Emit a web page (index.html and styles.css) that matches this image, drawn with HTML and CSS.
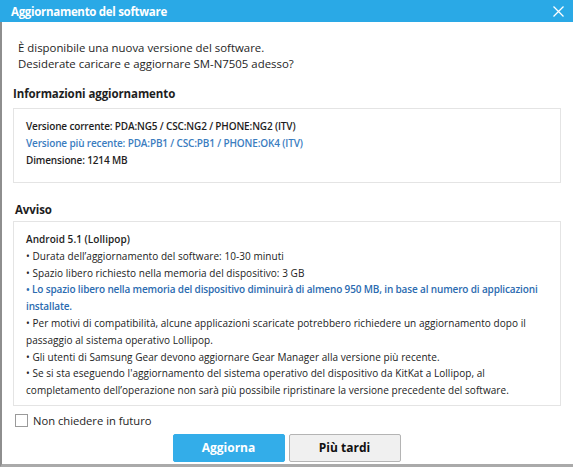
FILE: index.html
```html
<!DOCTYPE html>
<html lang="it">
<head>
<meta charset="utf-8">
<title>Aggiornamento del software</title>
<link rel="stylesheet" href="styles.css">
</head>
<body>
<div class="window">
  <header class="titlebar">
    <span class="title">Aggiornamento del software</span>
    <svg class="close" width="11" height="11" viewBox="0 0 11 11"><path d="M0.5 0.5 L10.5 10.5 M10.5 0.5 L0.5 10.5" stroke="#ffffff" stroke-width="1.3" fill="none"/></svg>
  </header>
  <main class="content">
    <p class="intro">È disponibile una nuova versione del software.<br>Desiderate caricare e aggiornare SM-N7505 adesso?</p>
    <h2 class="heading heading-info">Informazioni aggiornamento</h2>
    <div class="box info">
      <div>Versione corrente: PDA:NG5 / CSC:NG2 / PHONE:NG2 (ITV)</div>
      <div class="blue">Versione più recente: PDA:PB1 / CSC:PB1 / PHONE:OK4 (ITV)</div>
      <div>Dimensione: 1214 MB</div>
    </div>
    <h2 class="heading heading-warn">Avviso</h2>
    <div class="box warn">
      <div class="strong">Android 5.1 (Lollipop)</div>
      <div>• Durata dell’aggiornamento del software: 10-30 minuti</div>
      <div>• Spazio libero richiesto nella memoria del dispositivo: 3 GB</div>
      <div class="strong blue2">• Lo spazio libero nella memoria del dispositivo diminuirà di almeno 950 MB, in base al numero di applicazioni<br>installate.</div>
      <div>• Per motivi di compatibilità, alcune applicazioni scaricate potrebbero richiedere un aggiornamento dopo il<br>passaggio al sistema operativo Lollipop.</div>
      <div>• Gli utenti di Samsung Gear devono aggiornare Gear Manager alla versione più recente.</div>
      <div>• Se si sta eseguendo l'aggiornamento del sistema operativo del dispositivo da KitKat a Lollipop, al<br>completamento dell’operazione non sarà più possibile ripristinare la versione precedente del software.</div>
    </div>
    <label class="check"><span class="checkbox"></span><span>Non chiedere in futuro</span></label>
    <div class="buttons">
      <button class="btn primary">Aggiorna</button>
      <button class="btn secondary">Più tardi</button>
    </div>
  </main>
</div>
</body>
</html>
```

FILE: styles.css
```css
* { box-sizing: border-box; }
html, body { margin: 0; padding: 0; background: #ffffff; }
body { font-family: "Open Sans", "Noto Sans", sans-serif; color: #1e1e1e; }
.window { width: 573px; height: 467px; display: flex; flex-direction: column; }
.titlebar {
  height: 22px; background: #2aa9e6; color: #ffffff;
  display: flex; align-items: center; justify-content: space-between;
  padding: 0 9px 0 11px;
}
.title { font-size: 11.5px; font-weight: 700; letter-spacing: -0.3px; }
.close { display: block; }
.content {
  flex: 1; border-left: 2px solid #8e8e8e; border-bottom: 3px solid #aaaaaa;
  padding: 18px 12px 0 11px;
}
.intro { margin: 0 0 14px 5px; font-size: 11.4px; line-height: 16px; }
.heading { margin: 0; font-size: 11.5px; line-height: 16px; font-weight: 700; letter-spacing: -0.1px; }
.heading-info { margin-bottom: 6px; }
.heading-warn { margin-left: 2px; margin-bottom: 3px; }
.box { border: 1px solid #e4e4e4; background: #ffffff; white-space: nowrap; }
.info { padding: 9px 12px 13px; font-size: 10px; line-height: 17px; font-weight: 600; letter-spacing: -0.15px; margin-bottom: 19px; }
.warn { padding: 9px 12px 6px; font-size: 10px; line-height: 16.8px; color: #222222; letter-spacing: 0.05px; }
.blue { color: #3b7dbf; }
.strong { font-weight: 600; }
.blue2 { color: #2b6bb0; letter-spacing: -0.15px; }
.check { display: flex; align-items: center; gap: 5px; margin: 7px 0 0 2px; font-size: 11.2px; line-height: 16px; }
.checkbox { width: 13px; height: 13px; border: 1px solid #9a9a9a; background: #fff; }
.buttons { display: flex; justify-content: center; gap: 4px; margin-top: 5px; padding-right: 1px; }
.btn { width: 112px; height: 28px; font-family: inherit; font-size: 12px; font-weight: 700; border-radius: 2px; }
.primary { background: #33ade9; color: #ffffff; border: 1px solid #33ade9; }
.secondary { background: #f0f0f0; color: #111111; border: 1px solid #b4b4b4; }
```
